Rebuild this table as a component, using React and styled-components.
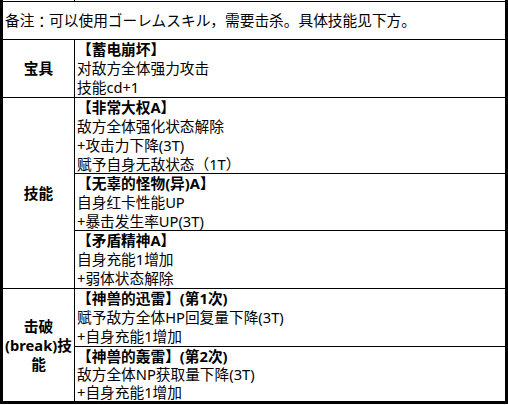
import React from "react";
import styled, { createGlobalStyle } from "styled-components";

const Global = createGlobalStyle`
  html, body { margin: 0; padding: 0; background: #fff; }
  body { font-family: "Noto Sans", "Noto Sans CJK SC", sans-serif; }
`;

const Sheet = styled.div`
  width: 508px;
  height: 405px;
  overflow: hidden;
  background: #fff;
`;

const Frame = styled.div`
  width: 508px;
  box-sizing: border-box;
  display: flex;
  flex-direction: column;
  border-left: 3px solid #000;
  border-right: 3px solid #000;
  border-bottom: 3px solid #000;
  font-size: 14.7px;
  line-height: 19px;
  color: #000;
`;

const TopStrip = styled.div`
  display: flex;
  height: 1px;
  border-bottom: 1px solid #000;
`;

const TopStub = styled.div`
  width: 72px;
  box-sizing: border-box;
  border-right: 1px solid #000;
`;

const NoteRow = styled.div`
  height: 37px;
  display: flex;
  align-items: center;
  padding-left: 2px;
  border-bottom: 1px solid #000;
  white-space: nowrap;
`;

const Colon = styled.span`
  font-family: "Noto Sans CJK JP", sans-serif;
`;

const Section = styled.div`
  display: flex;
  border-bottom: ${(p) => (p.$last ? "none" : "1px solid #000")};
`;

const Label = styled.div`
  width: 72px;
  flex-shrink: 0;
  box-sizing: border-box;
  border-right: 1px solid #000;
  padding: 0 2px;
  display: flex;
  align-items: center;
  justify-content: center;
  text-align: center;
  font-weight: 700;
`;

const Entries = styled.div`
  flex: 1;
  display: flex;
  flex-direction: column;
`;

const Entry = styled.div`
  height: ${(p) => p.$h}px;
  line-height: ${(p) => p.$lh || 19}px;
  padding-left: 2px;
  overflow: hidden;
  border-bottom: ${(p) => (p.$last ? "none" : "1px solid #000")};
`;

const Head = styled.div`
  font-weight: 700;
  white-space: nowrap;
`;

const Line = styled.div`
  white-space: nowrap;
`;

const sections = [
  {
    label: "宝具",
    entries: [
      { h: 57, head: "【蓄电崩坏】", lines: ["对敌方全体强力攻击", "技能cd+1"] },
    ],
  },
  {
    label: "技能",
    entries: [
      {
        h: 75,
        head: "【非常大权A】",
        lines: ["敌方全体强化状态解除", "+攻击力下降(3T)", "赋予自身无敌状态（1T）"],
      },
      { h: 56, head: "【无辜的怪物(异)A】", lines: ["自身红卡性能UP", "+暴击发生率UP(3T)"] },
      { h: 57, head: "【矛盾精神A】", lines: ["自身充能1增加", "+弱体状态解除"] },
    ],
  },
  {
    label: "击破(break)技能",
    entries: [
      {
        h: 57,
        head: "【神兽的迅雷】(第1次)",
        lines: ["赋予敌方全体HP回复量下降(3T)", "+自身充能1增加"],
      },
      {
        h: 54,
        lh: 18,
        head: "【神兽的轰雷】(第2次)",
        lines: ["敌方全体NP获取量下降(3T)", "+自身充能1增加"],
      },
    ],
  },
];

export default function App() {
  return (
    <Sheet lang="zh-CN">
      <Global />
      <Frame>
        <TopStrip>
          <TopStub />
        </TopStrip>
        <NoteRow>
          备注<Colon>：</Colon>可以使用ゴーレムスキル，需要击杀。具体技能见下方。
        </NoteRow>
        {sections.map((s, si) => (
          <Section key={s.label} $last={si === sections.length - 1}>
            <Label>{s.label}</Label>
            <Entries>
              {s.entries.map((e, ei) => (
                <Entry
                  key={e.head}
                  $h={e.h}
                  $lh={e.lh}
                  $last={ei === s.entries.length - 1}
                >
                  <Head>{e.head}</Head>
                  {e.lines.map((l) => (
                    <Line key={l}>{l}</Line>
                  ))}
                </Entry>
              ))}
            </Entries>
          </Section>
        ))}
      </Frame>
    </Sheet>
  );
}
